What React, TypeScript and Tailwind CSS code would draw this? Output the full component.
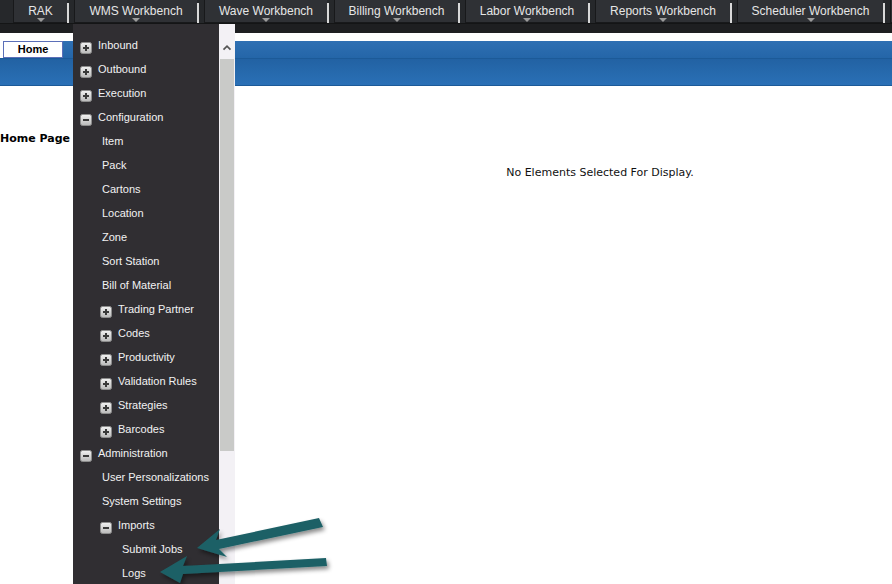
import React from "react";

type Item = { label: string; level: number; icon?: "plus" | "minus" };

const menu: Item[] = [
  { label: "Inbound", level: 0, icon: "plus" },
  { label: "Outbound", level: 0, icon: "plus" },
  { label: "Execution", level: 0, icon: "plus" },
  { label: "Configuration", level: 0, icon: "minus" },
  { label: "Item", level: 1 },
  { label: "Pack", level: 1 },
  { label: "Cartons", level: 1 },
  { label: "Location", level: 1 },
  { label: "Zone", level: 1 },
  { label: "Sort Station", level: 1 },
  { label: "Bill of Material", level: 1 },
  { label: "Trading Partner", level: 1, icon: "plus" },
  { label: "Codes", level: 1, icon: "plus" },
  { label: "Productivity", level: 1, icon: "plus" },
  { label: "Validation Rules", level: 1, icon: "plus" },
  { label: "Strategies", level: 1, icon: "plus" },
  { label: "Barcodes", level: 1, icon: "plus" },
  { label: "Administration", level: 0, icon: "minus" },
  { label: "User Personalizations", level: 1 },
  { label: "System Settings", level: 1 },
  { label: "Imports", level: 1, icon: "minus" },
  { label: "Submit Jobs", level: 2 },
  { label: "Logs", level: 2 },
];

const tabs = [
  { label: "RAK", w: "w-[54px]" },
  { label: "WMS Workbench", w: "w-[123px]" },
  { label: "Wave Workbench", w: "w-[123px]" },
  { label: "Billing Workbench", w: "w-[124px]" },
  { label: "Labor Workbench", w: "w-[123px]" },
  { label: "Reports Workbench", w: "w-[135px]" },
  { label: "Scheduler Workbench", w: "w-[146px]" },
  { label: "", w: "w-[20px]" },
];

function ToggleIcon({ kind }: { kind: "plus" | "minus" }) {
  return (
    <svg viewBox="0 0 12 12" className="h-[12px] w-[12px] shrink-0 mt-[5px]">
      <defs>
        <linearGradient id="tg" x1="0" y1="0" x2="0" y2="1">
          <stop offset="0" stopColor="#f2f2f2" />
          <stop offset="1" stopColor="#b9b9b9" />
        </linearGradient>
      </defs>
      <rect x="0.5" y="0.5" width="11" height="11" rx="2" fill="url(#tg)" stroke="#8d8d8d" />
      <rect x="3" y="5" width="6" height="2" fill="#3a3a3a" />
      {kind === "plus" && <rect x="5" y="3" width="2" height="6" fill="#3a3a3a" />}
    </svg>
  );
}

function MenuRow({ item }: { item: Item }) {
  const pad =
    item.icon
      ? item.level === 0
        ? "pl-[7px]"
        : "pl-[27px]"
      : item.level === 1
        ? "pl-[29px]"
        : "pl-[49px]";
  return (
    <div className={`flex h-6 items-center gap-[6px] ${pad}`}>
      {item.icon && <ToggleIcon kind={item.icon} />}
      <span className="whitespace-nowrap text-[11px] text-[#f2f2f2]">{item.label}</span>
    </div>
  );
}

function Arrows() {
  return (
    <svg className="pointer-events-none absolute inset-0 h-full w-full" viewBox="0 0 892 584">
      <defs>
        <filter id="sh" x="-20%" y="-50%" width="140%" height="200%">
          <feDropShadow dx="2" dy="3" stdDeviation="2" floodColor="#000" floodOpacity="0.45" />
        </filter>
      </defs>
      <g filter="url(#sh)" fill="#1d6066">
        <polygon points="197,548 220,529 216,540 319,518 323,527 219,549 227,557" />
        <polygon points="160,572 187,556 183,566 326,558 327,566 183,574 180,583" />
      </g>
    </svg>
  );
}

export default function App() {
  return (
    <div
      className="relative h-[584px] w-[892px] overflow-hidden bg-white"
      style={{ fontFamily: "Arial, 'Liberation Sans', sans-serif" }}
    >
      {/* top nav */}
      <div className="bg-[#1e1f21]">
        <div className="flex h-[23px] items-stretch bg-[#26282b] pl-[13px]">
          {tabs.map((t, i) => (
            <div key={i} className="flex items-stretch">
              <div
                className={`relative flex ${t.w} flex-col items-center border-b border-l border-[#18191b] bg-[#2f3135]`}
              >
                <span className="pt-[4px] text-[12px] leading-[14px] text-[#e6e6e6]">{t.label}</span>
                {t.label && (
                  <span className="h-0 w-0 border-x-[4px] border-t-[4px] border-x-transparent border-t-[#9c9c9c]" />
                )}
              </div>
              {i < tabs.length - 1 && (
                <div className="flex items-end pr-[5px]">
                  <div className="h-[20px] w-[2px] bg-[#d8d8d8]" />
                </div>
              )}
            </div>
          ))}
        </div>
        <div className="h-[10px] border-t border-[#141516]" />
      </div>

      <div className="h-[8px] bg-white" />

      {/* blue header */}
      <div>
        <div className="flex h-[17px] items-stretch">
          <div className="w-[3px] bg-white" />
          <div className="flex w-[60px] items-center justify-center border border-[#5b6fb8] bg-white text-[11px] font-bold text-black">
            Home
          </div>
          <div className="flex-1 bg-gradient-to-b from-[#2f6fb3] to-[#2466a8]" />
        </div>
        <div className="h-[28px] border-t border-[#1c5a98] border-b bg-gradient-to-b from-[#2262a3] to-[#2a70b6]" />
      </div>

      {/* page body */}
      <div style={{ fontFamily: "'DejaVu Sans', Verdana, sans-serif" }}>
        <div className="pt-[46px] text-[11px] font-bold leading-[14px] text-black">Home Page</div>
        <div className="pl-[308px] pt-[20px] text-center text-[11px] leading-[14px] text-[#111]">
          No Elements Selected For Display.
        </div>
      </div>

      {/* WMS dropdown */}
      <div className="absolute left-[73px] top-[24px] flex h-[560px]">
        <div className="w-[146px] bg-[#302e32] pt-[9px]">
          {menu.map((m) => (
            <MenuRow key={m.label} item={m} />
          ))}
        </div>
        <div className="flex w-[16px] flex-col bg-[#f3f1f5]">
          <div className="flex h-[35px] items-center justify-center pt-[12px]">
            <svg viewBox="0 0 10 8" className="h-[7px] w-[10px]">
              <path d="M1 6.5 5 2.5 9 6.5" fill="none" stroke="#555" strokeWidth="2" />
            </svg>
          </div>
          <div className="mx-[1px] h-[392px] bg-[#c9cac8]" />
        </div>
      </div>

      <Arrows />
    </div>
  );
}
